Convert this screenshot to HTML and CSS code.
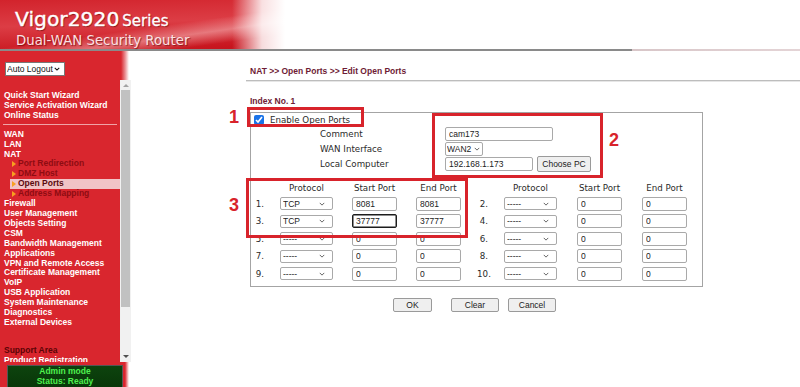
FILE: index.html
```html
<!DOCTYPE html>
<html lang="en">
<head>
<meta charset="utf-8">
<title>Vigor2920 - Edit Open Ports</title>
<link rel="stylesheet" href="styles.css">
</head>
<body>
<header class="banner">
  <div class="brand">
    <div class="brand-top"><span class="model">Vigor2920</span><span class="series">Series</span></div>
    <div class="brand-sub">Dual-WAN Security Router</div>
  </div>
</header>
<div class="banner-line"></div>
<div class="layout">
  <aside class="side">
    <div class="side-top">
      <span class="sel logout"><select><option>Auto Logout</option></select><svg class="chev dark" viewBox="0 0 8 5"><path d="M1 1l3 3 3-3" fill="none" stroke="#111" stroke-width="1.4"/></svg></span>
    </div>
    <div class="menu-wrap">
      <nav class="menu">
        <div class="item">Quick Start Wizard</div>
        <div class="item">Service Activation Wizard</div>
        <div class="item">Online Status</div>
        <div class="sep"></div>
        <div class="item">WAN</div>
        <div class="item">LAN</div>
        <div class="item">NAT</div>
        <div class="sub"><span class="tri"></span>Port Redirection</div>
        <div class="sub"><span class="tri"></span>DMZ Host</div>
        <div class="sub active"><span class="tri"></span>Open Ports</div>
        <div class="sub"><span class="tri"></span>Address Mapping</div>
        <div class="item">Firewall</div>
        <div class="item">User Management</div>
        <div class="item">Objects Setting</div>
        <div class="item">CSM</div>
        <div class="item">Bandwidth Management</div>
        <div class="item">Applications</div>
        <div class="item">VPN and Remote Access</div>
        <div class="item">Certificate Management</div>
        <div class="item">VoIP</div>
        <div class="item">USB Application</div>
        <div class="item">System Maintenance</div>
        <div class="item">Diagnostics</div>
        <div class="item">External Devices</div>
        <div class="item support">Support Area</div>
        <div class="item">Product Registration</div>
      </nav>
      <div class="sbar">
        <div class="arr up"></div>
        <div class="thumb"></div>
        <div class="track"></div>
        <div class="arr down"></div>
      </div>
    </div>
    <div class="side-bot">
      <div class="status">Admin mode<br>Status: Ready</div>
    </div>
  </aside>

  <main class="main">
    <div class="title">NAT &gt;&gt; Open Ports &gt;&gt; Edit Open Ports</div>
    <div class="index">Index No. 1</div>

    <div class="form">
      <div class="row enable"><input type="checkbox" class="chk" checked><span class="lbl">Enable Open Ports</span></div>
      <div class="row"><span class="key">Comment</span><input class="txt w108" value="cam173"></div>
      <div class="row"><span class="key">WAN Interface</span><span class="sel wan"><select><option>WAN2</option></select><svg class="chev" viewBox="0 0 8 5"><path d="M1 1l3 3 3-3" fill="none" stroke="#444" stroke-width="1.1"/></svg></span></div>
      <div class="row"><span class="key">Local Computer</span><input class="txt w88" value="192.168.1.173"><button class="btn choose">Choose PC</button></div>

      <div class="ports">
        <div></div><div class="hd w52"><span>Protocol</span></div><div class="hd w45"><span>Start Port</span></div><div class="hd w45"><span>End Port</span></div>
        <div></div><div class="hd w52"><span>Protocol</span></div><div class="hd w45"><span>Start Port</span></div><div class="hd w45"><span>End Port</span></div>

        <div class="no">1.</div><div class="cell"><span class="sel p"><select><option>TCP</option></select><svg class="chev" viewBox="0 0 8 5"><path d="M1 1l3 3 3-3" fill="none" stroke="#444" stroke-width="1.1"/></svg></span></div><div class="cell"><input class="txt pt" value="8081"></div><div class="cell"><input class="txt pt" value="8081"></div>
        <div class="no">2.</div><div class="cell"><span class="sel p"><select><option>-----</option></select><svg class="chev" viewBox="0 0 8 5"><path d="M1 1l3 3 3-3" fill="none" stroke="#444" stroke-width="1.1"/></svg></span></div><div class="cell"><input class="txt pt" value="0"></div><div class="cell"><input class="txt pt" value="0"></div>

        <div class="no">3.</div><div class="cell"><span class="sel p"><select><option>TCP</option></select><svg class="chev" viewBox="0 0 8 5"><path d="M1 1l3 3 3-3" fill="none" stroke="#444" stroke-width="1.1"/></svg></span></div><div class="cell"><input class="txt pt focus" value="37777"></div><div class="cell"><input class="txt pt" value="37777"></div>
        <div class="no">4.</div><div class="cell"><span class="sel p"><select><option>-----</option></select><svg class="chev" viewBox="0 0 8 5"><path d="M1 1l3 3 3-3" fill="none" stroke="#444" stroke-width="1.1"/></svg></span></div><div class="cell"><input class="txt pt" value="0"></div><div class="cell"><input class="txt pt" value="0"></div>

        <div class="no">5.</div><div class="cell"><span class="sel p"><select><option>-----</option></select><svg class="chev" viewBox="0 0 8 5"><path d="M1 1l3 3 3-3" fill="none" stroke="#444" stroke-width="1.1"/></svg></span></div><div class="cell"><input class="txt pt" value="0"></div><div class="cell"><input class="txt pt" value="0"></div>
        <div class="no">6.</div><div class="cell"><span class="sel p"><select><option>-----</option></select><svg class="chev" viewBox="0 0 8 5"><path d="M1 1l3 3 3-3" fill="none" stroke="#444" stroke-width="1.1"/></svg></span></div><div class="cell"><input class="txt pt" value="0"></div><div class="cell"><input class="txt pt" value="0"></div>

        <div class="no">7.</div><div class="cell"><span class="sel p"><select><option>-----</option></select><svg class="chev" viewBox="0 0 8 5"><path d="M1 1l3 3 3-3" fill="none" stroke="#444" stroke-width="1.1"/></svg></span></div><div class="cell"><input class="txt pt" value="0"></div><div class="cell"><input class="txt pt" value="0"></div>
        <div class="no">8.</div><div class="cell"><span class="sel p"><select><option>-----</option></select><svg class="chev" viewBox="0 0 8 5"><path d="M1 1l3 3 3-3" fill="none" stroke="#444" stroke-width="1.1"/></svg></span></div><div class="cell"><input class="txt pt" value="0"></div><div class="cell"><input class="txt pt" value="0"></div>

        <div class="no">9.</div><div class="cell"><span class="sel p"><select><option>-----</option></select><svg class="chev" viewBox="0 0 8 5"><path d="M1 1l3 3 3-3" fill="none" stroke="#444" stroke-width="1.1"/></svg></span></div><div class="cell"><input class="txt pt" value="0"></div><div class="cell"><input class="txt pt" value="0"></div>
        <div class="no">10.</div><div class="cell"><span class="sel p"><select><option>-----</option></select><svg class="chev" viewBox="0 0 8 5"><path d="M1 1l3 3 3-3" fill="none" stroke="#444" stroke-width="1.1"/></svg></span></div><div class="cell"><input class="txt pt" value="0"></div><div class="cell"><input class="txt pt" value="0"></div>
      </div>
    </div>

    <div class="buttons">
      <button class="btn ok">OK</button>
      <button class="btn clear">Clear</button>
      <button class="btn cancel">Cancel</button>
    </div>

    <div class="mark box1"></div>
    <div class="mark box2"></div>
    <div class="mark box3"></div>
    <div class="num n1">1</div>
    <div class="num n2">2</div>
    <div class="num n3">3</div>
  </main>
</div>
</body>
</html>
```

FILE: styles.css
```css
* { box-sizing: border-box; margin: 0; padding: 0; }
html, body { width: 800px; height: 387px; overflow: hidden; background: #fff; }
body { font-family: "Liberation Sans", Arial, sans-serif; font-size: 8.5px; color: #222; }

/* ---------- banner ---------- */
.banner {
  height: 49px;
  background:
    linear-gradient(90deg, rgba(255,255,255,0) 0, rgba(255,255,255,0) 232px, rgba(255,255,255,0.85) 262px, #fff 285px),
    linear-gradient(172deg, rgba(255,255,255,0) 30%, rgba(255,215,215,0.45) 38%, rgba(255,255,255,0) 46%),
    linear-gradient(178deg, #d2232c 0%, #dc3d45 35%, #c8161f 70%, #a90f17 100%);
}
.brand { padding: 8px 0 0 15px; color: #fff; text-shadow: 1px 1px 1px rgba(90,0,0,0.6); }
.brand-top { line-height: 22px; white-space: nowrap; }
.model { font-family: "DejaVu Sans", sans-serif; font-size: 20.3px; -webkit-text-stroke: 0.4px #fff; }
.series { font-family: "DejaVu Sans", sans-serif; font-size: 15px; margin-left: 3px; -webkit-text-stroke: 0.3px #fff; }
.brand-sub { font-family: "DejaVu Sans", sans-serif; font-size: 13.3px; line-height: 15px; margin-top: -1px; margin-left: 1px; color: #fbe1e4; }
.banner-line { height: 2px; background: linear-gradient(90deg, #8a8a8a 0, #8a8a8a 632px, #d8c6c8 632px, #e4d4d6 800px); }

/* ---------- layout ---------- */
.layout { display: flex; height: 336px; }

/* ---------- sidebar ---------- */
.side { width: 131px; flex: none; display: flex; flex-direction: column; }
.side-top {
  height: 29px;
  padding: 11px 0 0 5px;
  background: linear-gradient(90deg, #d9262e 0, #d9262e 121px, #e98a8f 125px, #fff 129px);
}
.menu-wrap { height: 282px; display: flex; }
.menu {
  width: 120px; flex: none; background: #d9262e;
  padding: 11px 0 0 0;
  font-weight: bold; line-height: 9.9px; color: #fff; white-space: nowrap;
}
.item { padding-left: 4px; }
.sep { height: 1px; background: #f0a3a7; margin: 3px 3px 5px 3px; }
.sub { padding-left: 12px; color: #8e0c12; display: flex; align-items: center; }
.sub.active { background: #f1c3c6; color: #5a0a0e; width: 110px; margin-left: 10px; padding-left: 2px; }
.tri { width: 0; height: 0; border-left: 4px solid #f7a020; border-top: 3.5px solid transparent; border-bottom: 3.5px solid transparent; margin-right: 2px; }
.support { margin-top: 18px; color: #5b0305; }
.sbar { width: 11px; flex: none; background: #f1f1f1; display: flex; flex-direction: column; align-items: center; }
.arr { width: 0; height: 0; border-left: 3px solid transparent; border-right: 3px solid transparent; }
.arr.up { border-bottom: 3px solid #a3a3a3; margin: 4px 0 3px; }
.thumb { width: 9px; height: 217px; background: #c1c1c1; }
.track { flex: 1; }
.arr.down { border-top: 3px solid #505050; margin: 0 0 4px; }
.side-bot { height: 25px; padding: 3px 8px 0 7px; background: linear-gradient(90deg, #d9262e 0, #d9262e 125px, #fff 129px); }
.status {
  width: 116px; height: 24px;
  background: linear-gradient(180deg, #0d430e, #083608);
  border: 1px solid #555; border-bottom: 0;
  color: #4ff04f; font-weight: bold; text-align: center; line-height: 10px;
}

/* ---------- form controls ---------- */
.sel {
  display: inline-flex; align-items: center; height: 14px;
  border: 1px solid #a9a9a9; border-radius: 2px; background: #fff;
}
.sel select {
  appearance: none; -webkit-appearance: none; border: 0; background: transparent; outline: none;
  flex: 1; min-width: 0; height: 100%; padding: 0 0 0 2px;
  font-family: "Liberation Sans", Arial, sans-serif; font-size: 8.5px; color: #222;
}
.chev { width: 6px; height: 4px; flex: none; margin: 0 5px 0 -11px; pointer-events: none; }
.logout { width: 60px; height: 14px; border: 1px solid #777; border-radius: 0; }
.logout select { color: #111; padding-left: 1px; }
.chev.dark { width: 6px; height: 4px; margin-right: 4px; }
.wan { width: 38px; }
.wan select { padding-left: 1px; }
.wan .chev { margin: 0 2px 0 -8px; }

.txt {
  height: 14px; border: 1px solid #a9a9a9; border-radius: 2px; background: #fff;
  font-family: "Liberation Sans", Arial, sans-serif; font-size: 8.5px; color: #222; padding: 0 3px;
}
.btn {
  height: 15px; background: #efefef; border: 1px solid #9a9a9a; border-radius: 2px;
  font-family: "Liberation Sans", Arial, sans-serif; font-size: 8.5px; color: #222;
}

/* ---------- main ---------- */
.main { flex: 1; position: relative; padding-left: 119px; }
.title {
  margin: 14px 0 0 -4px; padding: 0 0 3px 4px; height: 16px; line-height: 12px;
  font-weight: bold; color: #6e1b35;
  border-bottom: 1px solid #bdbdbd; box-shadow: 0 1px 0 #e6e6e6;
}
.index { margin-top: 14px; line-height: 12px; font-weight: bold; color: #6e1b35; }

.form {
  width: 453px; margin-top: 5px;
  border: 1px solid #a4a4a4;
  font-family: "DejaVu Sans", Verdana, sans-serif; font-size: 8.7px; color: #2a2a2a;
  padding-bottom: 3.5px;
}
.row { display: flex; align-items: center; height: 15px; }
.row.enable { height: 13px; }
.chk { width: 10px; height: 10px; margin: 0 6px 0 3px; accent-color: #1a73e8; }
.key { width: 194px; padding-left: 69px; }
.w108 { width: 108px; }
.w88 { width: 88px; }
.choose { width: 54px; height: 16px; margin-left: 4px; }

.ports {
  margin-top: 10px;
  display: grid;
  grid-template-columns: 29px 72px 64px 59px 29px 73px 65px 59px;
  grid-template-rows: 14px repeat(5, 17.5px);
  align-items: center;
}
.hd { display: flex; justify-content: center; white-space: nowrap; }
.hd.w52 { width: 53px; }
.hd.w45 { width: 45px; }
.no { width: 16px; text-align: center; margin-left: 1px; }
.cell { display: flex; align-items: center; }
.sel.p { width: 53px; height: 13px; }
.sel.p .chev { margin-right: 7px; }
.txt.pt { width: 45px; }
.txt.focus { border: 1px solid #1d1d1d; box-shadow: inset 0 0 0 0.5px #1d1d1d; }

.buttons { margin: 11px 0 0 143px; display: flex; align-items: center; }
.buttons .btn { height: 14px; }
.ok { width: 39px; }
.clear { width: 48px; margin-left: 19px; }
.cancel { width: 48px; margin-left: 9px; }

/* ---------- annotations ---------- */
.mark { position: absolute; border: 3px solid #d8232b; }
.box1 { left: 116px; top: 56px; width: 117px; height: 20px; }
.box2 { left: 301px; top: 62px; width: 171px; height: 65px; }
.box3 { left: 115px; top: 127px; width: 222px; height: 60px; }
.num { position: absolute; font-family: "Liberation Sans", Arial, sans-serif; font-weight: bold; font-size: 18px; line-height: 18px; color: #d8232b; }
.n1 { left: 98px; top: 57px; }
.n2 { left: 478px; top: 80px; }
.n3 { left: 98px; top: 145px; }
```
